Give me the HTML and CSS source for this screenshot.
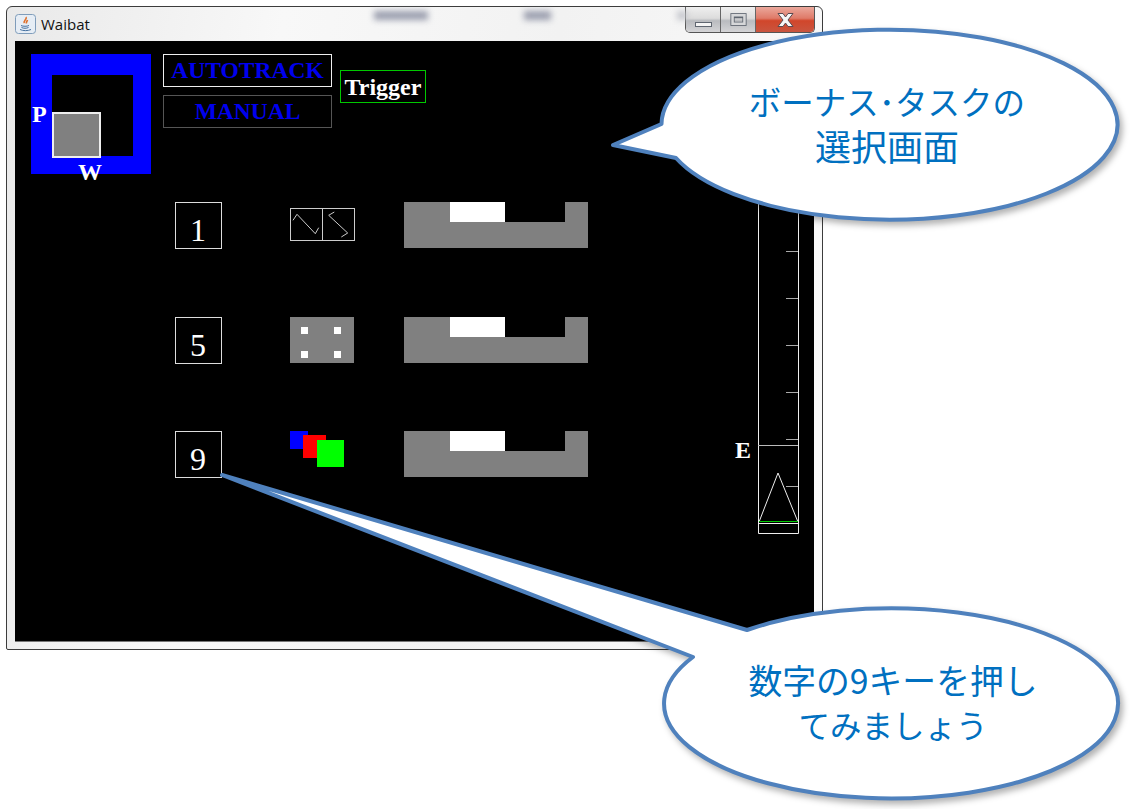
FILE: index.html
```html
<!DOCTYPE html>
<html lang="ja">
<head>
    <meta charset="UTF-8">
    <meta name="viewport" content="width=device-width, initial-scale=1.0">
    <title>Waibat</title>
    <link rel="stylesheet" href="styles.css">
</head>
<body>
    <div class="window">
        <div class="titlebar">
            <svg class="java-icon" width="21" height="20" viewBox="0 0 21 20">
                <rect x="0.5" y="0.5" width="20" height="19" rx="3" fill="#e6edf5" stroke="#7f9cba"/>
                <path d="M11 3C12.5 5 8 6.5 9.5 9M12.5 6C12 7.5 11 8 11.5 9.5" fill="none" stroke="#e0702a" stroke-width="1.6"/>
                <path d="M6 11.5C8 12.5 12 12.5 14 11.5M6.5 13.5C8.5 14.5 11.5 14.5 13.5 13.5M5 15.5C8 17 13 17 16 15.5" fill="none" stroke="#44709f" stroke-width="1"/>
            </svg>
            <span class="window-title">Waibat</span>
            <div class="blur-text blur-a"></div>
            <div class="blur-text blur-b"></div>
            <div class="blur-text blur-c"></div>
            <div class="window-buttons">
                <div class="win-btn btn-min"><span class="min-glyph"></span></div>
                <div class="win-btn btn-max"><span class="max-glyph"></span></div>
                <div class="win-btn btn-close">
                    <svg width="17" height="16" viewBox="0 0 17 16">
                        <path d="M1 1.500H6L8.500 5L11 1.500H16L11 8L16 14.500H11L8.500 11L6 14.500H1L6 8Z" fill="#f6f6f6" stroke="#5a4a50" stroke-width="1"/>
                    </svg>
                </div>
            </div>
        </div>

        <div class="canvas">
            <div class="top-row">
                <div class="radar">
                    <div class="radar-inner"></div>
                    <div class="radar-box"></div>
                    <span class="radar-label label-p">P</span>
                    <span class="radar-label label-w">W</span>
                </div>
                <div class="modes">
                    <div class="mode mode-on">AUTOTRACK</div>
                    <div class="mode">MANUAL</div>
                </div>
                <div class="trigger">Trigger</div>
            </div>

            <div class="tasks">
                <div class="task">
                    <div class="task-key">1</div>
                    <svg class="task-icon icon-track" width="65" height="34" viewBox="0 0 65 34">
                        <rect x="0.5" y="0.5" width="64" height="32" fill="none" stroke="#ccc"/>
                        <path d="M32.500 0.500V32.500" stroke="#ccc"/>
                        <path d="M3 12.300L7 6.300L25.300 25.700L28.700 19.700M44.300 4L38.700 7.300L57.700 25L51.300 29" fill="none" stroke="#ccc"/>
                    </svg>
                    <div class="bar"><div class="bar-fill"></div><div class="bar-gap"></div></div>
                </div>
                <div class="task">
                    <div class="task-key">5</div>
                    <div class="task-icon icon-dots">
                        <span class="dot"></span><span class="dot"></span><span class="dot"></span><span class="dot"></span>
                    </div>
                    <div class="bar"><div class="bar-fill"></div><div class="bar-gap"></div></div>
                </div>
                <div class="task">
                    <div class="task-key">9</div>
                    <svg class="task-icon" width="54" height="36" viewBox="0 0 54 36">
                        <rect width="18" height="18" fill="#0000ff"/>
                        <rect x="13" y="4" width="23" height="23" fill="#ff0000"/>
                        <rect x="27" y="9" width="27" height="27" fill="#00ff00"/>
                    </svg>
                    <div class="bar"><div class="bar-fill"></div><div class="bar-gap"></div></div>
                </div>
            </div>

            <svg class="gauge" width="80" height="405" viewBox="0 0 80 405">
                <path d="M38.500 0V403.500H78.500V0" fill="none" stroke="#eee"/>
                <path d="M66 121.500H78M66 168.500H78M66 215.500H78M66 262.500H78M66 309.500H78M66 356.500H78" stroke="#aaa"/>
                <path d="M38 315.500H78" stroke="#bbb"/>
                <path d="M39 392L58 343L78 392" fill="none" stroke="#eee"/>
                <path d="M39 391.500H78" stroke="#00c800"/>
                <path d="M39 393.500H78" stroke="#eee"/>
                <text class="gauge-label" x="15" y="328">E</text>
            </svg>
        </div>
    </div>

    <svg class="callouts" width="1130" height="809" viewBox="0 0 1130 809">
        <path class="callout" d="M661.500 124A228 95 0 1 1 676 158L613 145Z"/>
        <path class="callout" d="M747 630A227 95 0 1 1 693 657L222 475Z"/>
    </svg>
    <div class="callout-text text-top">
        <div class="line-kana-top">ボーナス･タスクの</div>
        <div class="line-kanji-top">選択画面</div>
    </div>
    <div class="callout-text text-bottom">
        <div class="line-mixed">数字の9キーを押し</div>
        <div class="line-kana-bottom">てみましょう</div>
    </div>
</body>
</html>
```

FILE: styles.css
```css
body {
    margin: 0;
    width: 1130px;
    height: 809px;
    overflow: hidden;
    position: relative;
    background-color: white;
}

.window {
    box-sizing: border-box;
    width: 817px;
    height: 644px;
    margin: 6px 0 0 6px;
    padding: 0 8px 7px;
    border: 1px solid #3c3c3c;
    border-radius: 6px 6px 2px 2px;
    background: linear-gradient(100deg, #e9e9e9 0%, #f8f8f8 30%, #f2f2f2 60%, #fbfbfb 100%);
    display: flex;
    flex-direction: column;
}

.titlebar {
    height: 34px;
    flex-shrink: 0;
    position: relative;
    display: flex;
    align-items: flex-start;
}
.java-icon {
    margin-top: 7px;
}
.window-title {
    margin: 7px 0 0 5px;
    font-family: "Open Sans", sans-serif;
    font-size: 15px;
    line-height: 20px;
    color: #111;
}
.blur-text {
    position: absolute;
    top: 4px;
    height: 9px;
    background-color: #9a9eae;
    filter: blur(3px);
}
.blur-a {
    left: 359px;
    width: 54px;
}
.blur-b {
    left: 509px;
    width: 27px;
}
.blur-c {
    left: 662px;
    width: 10px;
    background-color: #c4c6cc;
}
.window-buttons {
    margin-left: auto;
    display: flex;
    height: 25px;
    margin-right: -1px;
    border: 1px solid #555;
    border-top: none;
    border-radius: 0 0 5px 5px;
    overflow: hidden;
}
.win-btn {
    display: flex;
    align-items: center;
    justify-content: center;
}
.btn-min,
.btn-max {
    width: 34px;
    background: linear-gradient(#efefef 0%, #dcdcdc 45%, #b9bbbf 55%, #d4d4d6 100%);
    border-right: 1px solid #666;
}
.btn-close {
    width: 58px;
    background: linear-gradient(#eba89c 0%, #df7a68 45%, #d1462b 55%, #c9553f 100%);
}
.min-glyph {
    width: 15px;
    height: 3px;
    margin-top: 9px;
    background-color: #f4f4f4;
    border: 1px solid #5f6670;
}
.max-glyph {
    width: 9px;
    height: 4px;
    border: 1px solid #5f6670;
    border-top-width: 2px;
    outline: 3px solid #d6d7d9;
    box-shadow: 0 0 0 4px #5f6670;
    transform: scale(0.85);
}

.canvas {
    flex: 1;
    position: relative;
    padding: 13px 0 0 16px;
    background-color: black;
    border-bottom: 1px solid #777;
}

.top-row {
    display: flex;
    align-items: flex-start;
}
.radar {
    box-sizing: border-box;
    width: 120px;
    height: 120px;
    padding: 21px 18px 18px 21px;
    position: relative;
    background-color: #0000ff;
}
.radar-inner {
    height: 100%;
    background-color: black;
}
.radar-box {
    position: absolute;
    left: 21px;
    top: 58px;
    width: 45px;
    height: 42px;
    background-color: gray;
    border: 2px solid #eee;
}
.radar-label {
    position: absolute;
    font-family: "Liberation Serif", serif;
    font-weight: bold;
    font-size: 24px;
    line-height: 24px;
    color: white;
}
.label-p {
    left: 1px;
    top: 48px;
}
.label-w {
    left: 47px;
    top: 106px;
}
.modes {
    width: 169px;
    margin-left: 12px;
    display: flex;
    flex-direction: column;
    gap: 8px;
}
.mode {
    box-sizing: border-box;
    height: 33px;
    border: 1px solid #555;
    font-family: "Liberation Serif", serif;
    font-weight: bold;
    font-size: 23.500px;
    line-height: 31px;
    text-align: center;
    color: #0000ee;
}
.mode-on {
    border-color: #eee;
}
.trigger {
    box-sizing: border-box;
    width: 86px;
    height: 33px;
    margin: 16px 0 0 8px;
    border: 1px solid #00c800;
    font-family: "Liberation Serif", serif;
    font-weight: bold;
    font-size: 24px;
    line-height: 33px;
    text-align: center;
    color: white;
}

.tasks {
    margin: 28px 0 0 144px;
    display: flex;
    flex-direction: column;
    gap: 67.700px;
}
.task {
    display: grid;
    grid-template-columns: 47px 182px 184px;
    align-items: start;
    height: 47px;
}
.task-key {
    box-sizing: border-box;
    width: 47px;
    height: 47px;
    padding-right: 1px;
    border: 1px solid #ddd;
    font-family: "Liberation Serif", serif;
    font-size: 32px;
    line-height: 55px;
    text-align: center;
    color: white;
}
.task-icon {
    margin-left: 68px;
}
.icon-track {
    margin-top: 6px;
}
.icon-dots {
    box-sizing: border-box;
    width: 64px;
    height: 46px;
    padding: 10px 13px 5px 11px;
    background-color: gray;
    display: grid;
    grid-template-columns: 7px 7px;
    justify-content: space-between;
    align-content: space-between;
}
.dot {
    height: 7px;
    background-color: white;
}
.bar {
    height: 46px;
    padding-left: 46px;
    box-sizing: border-box;
    background-color: gray;
    display: flex;
    align-items: flex-start;
}
.bar-fill {
    width: 55px;
    height: 20px;
    background-color: white;
}
.bar-gap {
    width: 60px;
    height: 20px;
    background-color: black;
}

.gauge {
    position: absolute;
    left: 705px;
    top: 89px;
}
.gauge-label {
    font-family: "Liberation Serif", serif;
    font-weight: bold;
    font-size: 24px;
    fill: white;
}

.callouts {
    position: absolute;
    left: 0;
    top: 0;
}
.callout {
    fill: white;
    stroke: #4f81bd;
    stroke-width: 4px;
    stroke-linejoin: round;
    filter: drop-shadow(3px 4px 3px rgba(0, 0, 0, 0.3));
}
.callout-text {
    position: absolute;
    width: 400px;
    font-family: "Noto Sans CJK JP", sans-serif;
    line-height: 45px;
    text-align: center;
    color: #0070c0;
}
.text-top {
    left: 687px;
    top: 78px;
}
.text-bottom {
    left: 693px;
    top: 657px;
}
.line-kana-top {
    font-size: 32.500px;
}
.line-kanji-top {
    font-size: 36px;
}
.line-mixed {
    font-size: 33.800px;
}
.line-kana-bottom {
    font-size: 31.500px;
}
```
